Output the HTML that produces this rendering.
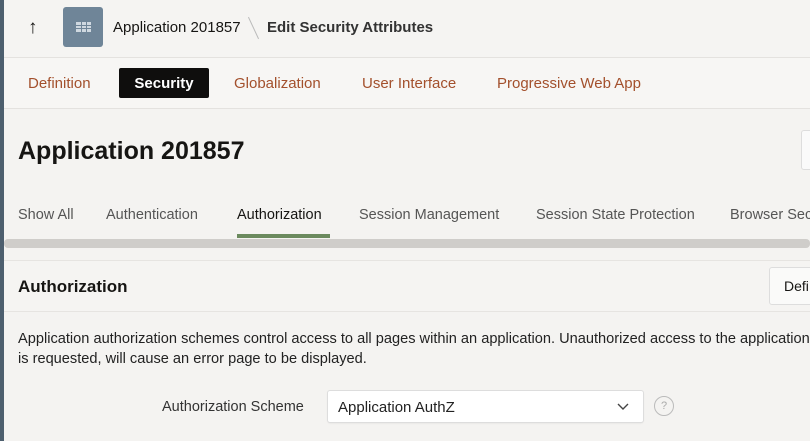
<!DOCTYPE html>
<html><head><style>
body{margin:0;width:810px;height:441px;overflow:hidden;background:#f4f3f1;font-family:"Liberation Sans",sans-serif;position:relative;color:#161513}
.a{position:absolute;white-space:nowrap}
</style></head><body>
<div class="a" style="left:0;top:0;width:4px;height:441px;background:#4d5f6e"></div>
<div class="a" style="left:4px;top:0;width:806px;height:57px;background:#f5f4f2;border-bottom:1px solid #e4e2df"></div>
<div class="a" style="left:28px;top:17px;font-size:19px">↑</div>
<div class="a" style="left:63px;top:7px;width:40px;height:40px;border-radius:3px;background:#6f8598">
<div style="position:absolute;left:13px;top:15px;width:15px;height:10px;background:#cfd8e0"></div>
<div style="position:absolute;left:13px;top:18px;width:15px;height:1px;background:#6f8598"></div>
<div style="position:absolute;left:13px;top:21px;width:15px;height:1px;background:#6f8598"></div>
<div style="position:absolute;left:18px;top:15px;width:1px;height:10px;background:#6f8598"></div>
<div style="position:absolute;left:23px;top:15px;width:1px;height:10px;background:#6f8598"></div>
</div>
<div class="a" style="left:113px;top:19px;font-size:15px">Application 201857</div>
<div class="a" style="left:253px;top:16px;width:1px;height:24px;background:#bbb;transform:rotate(-25deg)"></div>
<div class="a" style="left:267px;top:19px;font-size:15px;font-weight:bold;color:#333">Edit Security Attributes</div>
<div class="a" style="left:4px;top:58px;width:806px;height:50px;background:#f7f6f4;border-bottom:1px solid #e4e2df"></div>
<div class="a" style="left:28px;top:75px;font-size:15px;color:#a3502c">Definition</div>
<div class="a" style="left:119px;top:68px;width:90px;height:30px;background:#0f0e0d;border-radius:2px;color:#fff;font-weight:bold;font-size:15px;text-align:center;line-height:31px">Security</div>
<div class="a" style="left:234px;top:75px;font-size:15px;color:#a3502c">Globalization</div>
<div class="a" style="left:362px;top:75px;font-size:15px;color:#a3502c">User Interface</div>
<div class="a" style="left:497px;top:75px;font-size:15px;color:#a3502c">Progressive Web App</div>
<div class="a" style="left:18px;top:137px;font-size:25px;font-weight:bold">Application 201857</div>
<div class="a" style="left:801px;top:130px;width:20px;height:38px;border:1px solid #ddd;background:#fafafa;border-radius:3px"></div>
<div class="a" style="left:18px;top:207px;font-size:14.5px;color:#555">Show All</div>
<div class="a" style="left:106px;top:207px;font-size:14.5px;color:#555">Authentication</div>
<div class="a" style="left:237px;top:207px;font-size:14.5px;color:#161513">Authorization</div>
<div class="a" style="left:359px;top:207px;font-size:14.5px;color:#555">Session Management</div>
<div class="a" style="left:536px;top:207px;font-size:14.5px;color:#555">Session State Protection</div>
<div class="a" style="left:730px;top:207px;font-size:14.5px;color:#555">Browser Security</div>
<div class="a" style="left:237px;top:234px;width:93px;height:4px;background:#6b8a5e"></div>
<div class="a" style="left:4px;top:239px;width:806px;height:9px;background:#cfcdca;border-radius:4px"></div>
<div class="a" style="left:4px;top:260px;width:806px;height:50px;background:#f5f4f2;border-top:1px solid #e6e4e1;border-bottom:1px solid #e6e4e1"></div>
<div class="a" style="left:18px;top:277px;font-size:17px;font-weight:bold">Authorization</div>
<div class="a" style="left:769px;top:267px;width:50px;height:36px;border:1px solid #ddd;background:#fafaf9;border-radius:3px;font-size:14px;line-height:37px;padding-left:14px">Defi</div>
<div class="a" style="left:18px;top:329px;font-size:14.6px;line-height:20px;color:#222">Application authorization schemes control access to all pages within an application. Unauthorized access to the application<br>is requested, will cause an error page to be displayed.</div>
<div class="a" style="left:162px;top:399px;font-size:14.5px;color:#333">Authorization Scheme</div>
<div class="a" style="left:328px;top:391px;width:315px;height:31px;background:#fff;border-radius:2px;box-shadow:0 0 0 1px #ddd,0 1px 2px rgba(0,0,0,.1)"></div>
<div class="a" style="left:338px;top:399px;font-size:15px;color:#222">Application AuthZ</div>
<svg class="a" style="left:616px;top:401px" width="14" height="10"><path d="M2 3l5 5 5-5" fill="none" stroke="#444" stroke-width="1.4"/></svg>
<div class="a" style="left:654px;top:396px;width:18px;height:18px;border:1px solid #bbb;border-radius:50%;font-size:11px;color:#aaa;text-align:center;line-height:18px">?</div>
</body></html>
